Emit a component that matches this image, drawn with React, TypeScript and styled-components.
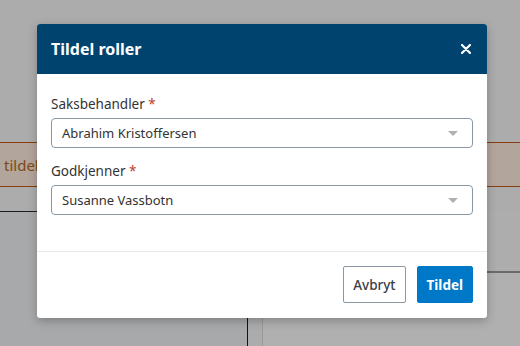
import React from 'react';
import styled, { createGlobalStyle } from 'styled-components';

const GlobalStyle = createGlobalStyle`
  html, body {
    margin: 0;
    padding: 0;
    width: 520px;
    height: 346px;
    overflow: hidden;
    background: #f7f7f7;
  }
  * {
    box-sizing: border-box;
  }
`;

// Page under the dialog
const Page = styled.div`
  width: 520px;
  height: 346px;
  position: relative;
  overflow: hidden;
  display: flex;
  flex-direction: column;
  font-family: "Noto Sans", "Open Sans", sans-serif;
  background: #f7f7f7;
`;

const TopArea = styled.div`
  height: 142px;
  flex-shrink: 0;
`;

const AlertBar = styled.div`
  height: 45px;
  flex-shrink: 0;
  background: #ffede0;
  border-top: 1px solid #c45616;
  border-bottom: 1px solid #c45616;
  display: flex;
  align-items: center;
  overflow: hidden;
  color: #b56a1d;
  font-size: 15px;
`;

const AlertText = styled.span`
  white-space: nowrap;
  margin-left: -134px;
`;

const Gap = styled.div`
  height: 24px;
  flex-shrink: 0;
`;

const ContentRow = styled.div`
  flex: 1;
  display: grid;
  grid-template-columns: 248px 14px 1fr;
`;

const LeftPanel = styled.div`
  background: #f0f2f5;
  border-top: 1px solid #2a2a2a;
  border-right: 1px solid #1a1a1a;
`;

const RightPanel = styled.div`
  background: #fcfcfc;
  border-left: 1px solid #dcdcdc;
  display: flex;
  flex-direction: column;
`;

const PanelHead = styled.div`
  height: 62px;
  border-bottom: 2px solid #999;
  background: #f8f8f8;
`;

const PanelTitle = styled.div`
  padding: 20px 0 0 21px;
  font-size: 16px;
  color: #333;
`;

const Backdrop = styled.div`
  position: absolute;
  inset: 0;
  background: rgba(0, 0, 0, 0.3);
`;

// Dialog
const Dialog = styled.div`
  position: absolute;
  left: 37px;
  top: 24px;
  width: 450px;
  background: #fff;
  border-radius: 3px;
  box-shadow: 0 3px 10px rgba(0, 0, 0, 0.25);
  overflow: hidden;
  font-family: "Noto Sans", "Open Sans", sans-serif;
`;

const Header = styled.div`
  height: 50px;
  background: #00436e;
  display: flex;
  align-items: center;
  justify-content: space-between;
  padding: 0 16px 0 14px;
  color: #fff;
`;

const Title = styled.h2`
  margin: 0;
  font-size: 16px;
  font-weight: 700;
`;

const Close = styled.button`
  border: none;
  background: none;
  padding: 0;
  color: #fff;
  display: flex;
  cursor: pointer;
`;

const Body = styled.div`
  padding: 22px 14px 36px;
  display: flex;
  flex-direction: column;
  gap: 15px;
  border-bottom: 1px solid #e8e8e8;
`;

const Field = styled.div`
  display: flex;
  flex-direction: column;
  gap: 6px;
`;

const Label = styled.label`
  font-size: 13.5px;
  color: #333;
  line-height: 16px;
`;

const Req = styled.span`
  color: #c0392b;
`;

const Select = styled.div`
  height: 30px;
  border: 1px solid #8797a6;
  border-radius: 4px;
  display: flex;
  align-items: center;
  justify-content: space-between;
  padding: 0 14px 0 10px;
  font-size: 13px;
  color: #333;
`;

const Caret = styled.span`
  width: 0;
  height: 0;
  border-left: 5px solid transparent;
  border-right: 5px solid transparent;
  border-top: 5px solid #b0b0b0;
`;

const Footer = styled.div`
  padding: 14px 14px 15px;
  display: flex;
  justify-content: flex-end;
  gap: 11px;
`;

const Button = styled.button<{ $primary?: boolean }>`
  height: 37px;
  padding: 0 9px;
  border-radius: 2px;
  font-family: "Noto Sans", "Open Sans", sans-serif;
  font-size: 13.5px;
  font-weight: ${p => (p.$primary ? 700 : 500)};
  border: 1px solid ${p => (p.$primary ? '#0078c8' : '#8a98a6')};
  background: ${p => (p.$primary ? '#0078c8' : '#fff')};
  color: ${p => (p.$primary ? '#fff' : '#3a4048')};
  cursor: pointer;
`;

const fields = [
  { label: 'Saksbehandler', value: 'Abrahim Kristoffersen' },
  { label: 'Godkjenner', value: 'Susanne Vassbotn' },
];

export default function App() {
  return (
    <>
      <GlobalStyle />
      <Page>
        <TopArea />
        <AlertBar>
          <AlertText>Saken har ikke blitt tildelt</AlertText>
        </AlertBar>
        <Gap />
        <ContentRow>
          <LeftPanel />
          <div />
          <RightPanel>
            <PanelHead />
            <PanelTitle>Aktivitet</PanelTitle>
          </RightPanel>
        </ContentRow>
        <Backdrop />
        <Dialog>
          <Header>
            <Title>Tildel roller</Title>
            <Close aria-label="Lukk">
              <svg width="10" height="10" viewBox="0 0 10 10">
                <path d="M1 1L9 9M9 1L1 9" stroke="#fff" strokeWidth="2.2" strokeLinecap="round" />
              </svg>
            </Close>
          </Header>
          <Body>
            {fields.map(f => (
              <Field key={f.label}>
                <Label>
                  {f.label} <Req>*</Req>
                </Label>
                <Select>
                  {f.value}
                  <Caret />
                </Select>
              </Field>
            ))}
          </Body>
          <Footer>
            <Button>Avbryt</Button>
            <Button $primary>Tildel</Button>
          </Footer>
        </Dialog>
      </Page>
    </>
  );
}
